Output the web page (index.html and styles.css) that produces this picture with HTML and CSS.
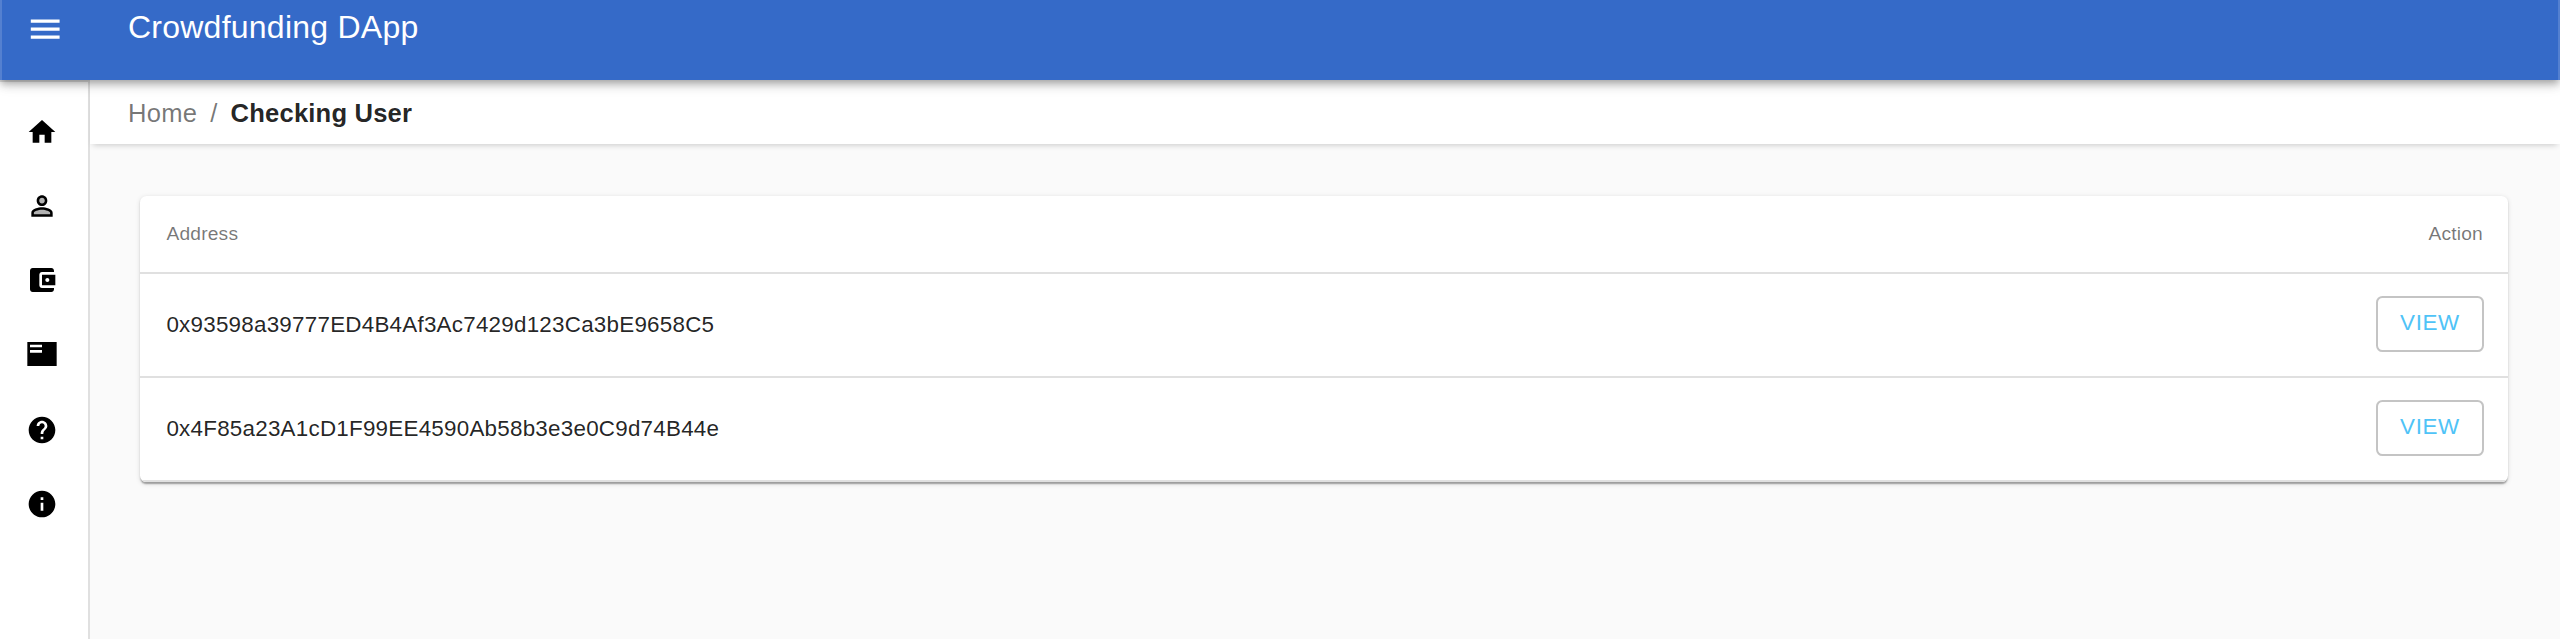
FILE: index.html
```
<!DOCTYPE html>
<html lang="en">
<head>
<meta charset="utf-8">
<title>Crowdfunding DApp</title>
<link rel="stylesheet" href="styles.css">
</head>
<body>
<header class="appbar">
  <svg class="menu-icon" viewBox="0 0 24 24"><path d="M3 18h18v-2H3v2zm0-5h18v-2H3v2zm0-7v2h18V6H3z"/></svg>
  <h1 class="title">Crowdfunding DApp</h1>
</header>
<div class="shell">
  <nav class="sidebar">
    <svg class="icon" viewBox="0 0 24 24"><path d="M10 20v-6h4v6h5v-8h3L12 3 2 12h3v8z"/></svg>
    <svg class="icon" viewBox="0 0 24 24"><path opacity=".3" d="M12 14c-3 0-7 1.500-7 4v1h14v-1c0-2.500-4-4-7-4zM12 5a3 3 0 1 0 0 6 3 3 0 0 0 0-6z"/><path d="M12 5.900c1.160 0 2.100.94 2.100 2.100s-.94 2.100-2.100 2.100S9.900 9.160 9.900 8s.94-2.100 2.100-2.100m0 9c2.970 0 6.100 1.460 6.100 2.100v1.100H5.900V17c0-.64 3.130-2.100 6.100-2.100M12 4C9.790 4 8 5.790 8 8s1.790 4 4 4 4-1.790 4-4-1.790-4-4-4zm0 9c-2.670 0-8 1.340-8 4v3h16v-3c0-2.660-5.330-4-8-4z"/></svg>
    <svg class="icon" viewBox="0 0 24 24"><path d="M21 18v1c0 1.100-.9 2-2 2H5c-1.110 0-2-.9-2-2V5c0-1.100.89-2 2-2h14c1.100 0 2 .9 2 2v1h-9c-1.110 0-2 .9-2 2v8c0 1.100.89 2 2 2h9zm-9-2h10V8H12v8zm4-2.500c-.83 0-1.500-.67-1.500-1.500s.67-1.500 1.500-1.500 1.500.67 1.500 1.500-.67 1.500-1.500 1.500z"/></svg>
    <svg class="icon" viewBox="0 0 24 24"><path d="M23 3H1v18h22V3zM12 11H3V9h9v2zm0-4H3V5h9v2z"/></svg>
    <svg class="icon" viewBox="0 0 24 24"><path d="M12 2C6.480 2 2 6.480 2 12s4.480 10 10 10 10-4.480 10-10S17.520 2 12 2zm1 17h-2v-2h2v2zm2.070-7.750l-.9.92C13.450 12.900 13 13.500 13 15h-2v-.5c0-1.100.45-2.100 1.170-2.830l1.240-1.260c.37-.36.59-.86.59-1.410 0-1.100-.9-2-2-2s-2 .9-2 2H8c0-2.210 1.790-4 4-4s4 1.790 4 4c0 .88-.36 1.680-.93 2.250z"/></svg>
    <svg class="icon" viewBox="0 0 24 24"><path d="M12 2C6.480 2 2 6.480 2 12s4.480 10 10 10 10-4.480 10-10S17.520 2 12 2zm1 15h-2v-6h2v6zm0-8h-2V7h2v2z"/></svg>
  </nav>
  <main class="main">
    <div class="breadcrumbs">
      <span class="crumb">Home</span><span class="slash">/</span><span class="current">Checking User</span>
    </div>
    <section class="card">
      <div class="row head"><span>Address</span><span>Action</span></div>
      <div class="row"><span>0x93598a39777ED4B4Af3Ac7429d123Ca3bE9658C5</span><button class="view">VIEW</button></div>
      <div class="row"><span>0x4F85a23A1cD1F99EE4590Ab58b3e3e0C9d74B44e</span><button class="view">VIEW</button></div>
    </section>
  </main>
</div>
</body>
</html>
```
FILE: styles.css
```
* { box-sizing: border-box; }
body {
  margin: 0;
  height: 639px;
  overflow: hidden;
  display: flex;
  flex-direction: column;
  background: #fafafa;
  color: rgba(0, 0, 0, 0.87);
  font-family: "Liberation Sans", Arial, sans-serif;
}
.appbar {
  position: relative;
  z-index: 2;
  flex: none;
  display: flex;
  align-items: flex-start;
  height: 80px;
  padding: 0 24px;
  background: #356ac8;
  border: solid #5480d0;
  border-width: 0 2px;
  color: #fff;
  box-shadow: 0 3.200px 6.400px -1.600px rgba(0,0,0,.2), 0 6.400px 8px rgba(0,0,0,.14), 0 1.600px 16px rgba(0,0,0,.12);
}
.menu-icon {
  width: 38.400px;
  height: 38.400px;
  margin-top: 10px;
  fill: #fff;
}
.title {
  margin: 2px 0 0 63.600px;
  font-size: 32px;
  font-weight: 400;
  line-height: 51px;
  letter-spacing: 0.0075em;
}
.shell { flex: 1; display: flex; min-height: 0; }
.sidebar {
  flex: none;
  width: 90px;
  padding: 34px 0 0 26px;
  display: flex;
  flex-direction: column;
  gap: 42.400px;
  background: #fff;
  border-top: 2px solid #e0e0e0;
  border-right: 2px solid #e0e0e0;
}
.icon { flex: none; width: 32px; height: 32px; fill: #000; }
.icon:nth-child(3), .icon:nth-child(4) { margin-top: -0.800px; }
.icon:nth-child(5) { margin-top: 1.600px; }
.main { flex: 1; display: flex; flex-direction: column; min-width: 0; }
.breadcrumbs {
  height: 64px;
  padding: 2px 38px 0;
  display: flex;
  align-items: center;
  background: #fff;
  font-size: 25.600px;
  letter-spacing: 0.00938em;
  box-shadow: 0 4px 6px -3px rgba(0,0,0,.2);
}
.crumb, .slash { color: rgba(0, 0, 0, 0.54); }
.slash { margin: 0 13px; }
.current { font-weight: 700; letter-spacing: 0.007em; }
.card {
  margin: 52px 52px 0 50px;
  background: #fff;
  border-radius: 6.400px;
  overflow: hidden;
  box-shadow: 0 3.200px 1.600px -1.600px rgba(0,0,0,.2), 0 1.600px 1.600px rgba(0,0,0,.14), 0 1.600px 4.800px rgba(0,0,0,.12);
}
.row {
  height: 104px;
  padding: 0 24px 0 26.400px;
  display: flex;
  align-items: center;
  justify-content: space-between;
  border-bottom: 2px solid #e0e0e0;
  font-size: 22.400px;
  letter-spacing: 0.01071em;
}
.head {
  height: 78px;
  padding-right: 25px;
  font-size: 19.200px;
  color: rgba(0, 0, 0, 0.54);
}
.view {
  width: 108px;
  height: 56px;
  margin-bottom: 2px;
  padding: 0 0 3px;
  background: transparent;
  border: 2px solid #c4c4c4;
  border-radius: 6.400px;
  color: #4fc3f7;
  font: inherit;
  letter-spacing: 0.02857em;
}
```
